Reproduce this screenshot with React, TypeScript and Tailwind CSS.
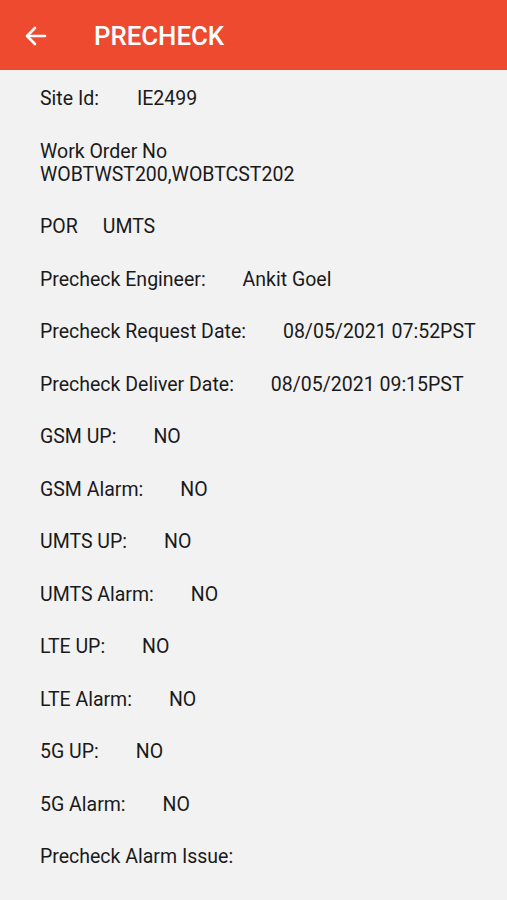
import React from 'react';

type Row = { label: string; value?: string; gap?: string };

const rows: Row[] = [
  { label: 'POR', value: 'UMTS', gap: 'ml-[25px]' },
  { label: 'Precheck Engineer:', value: 'Ankit Goel' },
  { label: 'Precheck Request Date:', value: '08/05/2021 07:52PST' },
  { label: 'Precheck Deliver Date:', value: '08/05/2021 09:15PST' },
  { label: 'GSM UP:', value: 'NO' },
  { label: 'GSM Alarm:', value: 'NO' },
  { label: 'UMTS UP:', value: 'NO' },
  { label: 'UMTS Alarm:', value: 'NO' },
  { label: 'LTE UP:', value: 'NO' },
  { label: 'LTE Alarm:', value: 'NO' },
  { label: '5G UP:', value: 'NO' },
  { label: '5G Alarm:', value: 'NO' },
  { label: 'Precheck Alarm Issue:' },
  { label: 'Comments:' },
];

function InfoRow({ label, value, gap = 'ml-[37px]' }: Row) {
  return (
    <div className="flex items-center leading-[23px]">
      <span>{label}</span>
      {value && <span className={gap}>{value}</span>}
    </div>
  );
}

export default function App() {
  return (
    <div
      className="w-[507px] h-[900px] overflow-hidden bg-[#f2f2f2] text-[#1a1a1a]"
      style={{ fontFamily: 'Roboto, "Noto Sans", sans-serif' }}
    >
      <header className="h-[70px] bg-[#ee4a30] flex items-center text-white">
        <div className="w-[94px] flex items-center pl-[25px] pt-[2px]">
          <svg width="22" height="20" viewBox="0 0 22 20" fill="none" stroke="currentColor" strokeWidth="2.6" strokeLinecap="round" strokeLinejoin="round">
            <path d="M20 10H3" />
            <path d="M10 2L2 10l8 8" />
          </svg>
        </div>
        <h1 className="text-[25.8px] font-medium pt-[3px]">PRECHECK</h1>
      </header>

      <main className="pl-[40px] pt-[17px] flex flex-col gap-[29.5px] text-[19.5px]">
        <div className="flex items-center leading-[23px]">
          <span>Site Id:</span>
          <span className="ml-[38px]">IE2499</span>
        </div>
        <div className="flex flex-col leading-[23px]">
          <span>Work Order No</span>
          <span>WOBTWST200,WOBTCST202</span>
        </div>
        {rows.map((r) => (
          <InfoRow key={r.label} {...r} />
        ))}
      </main>
    </div>
  );
}
